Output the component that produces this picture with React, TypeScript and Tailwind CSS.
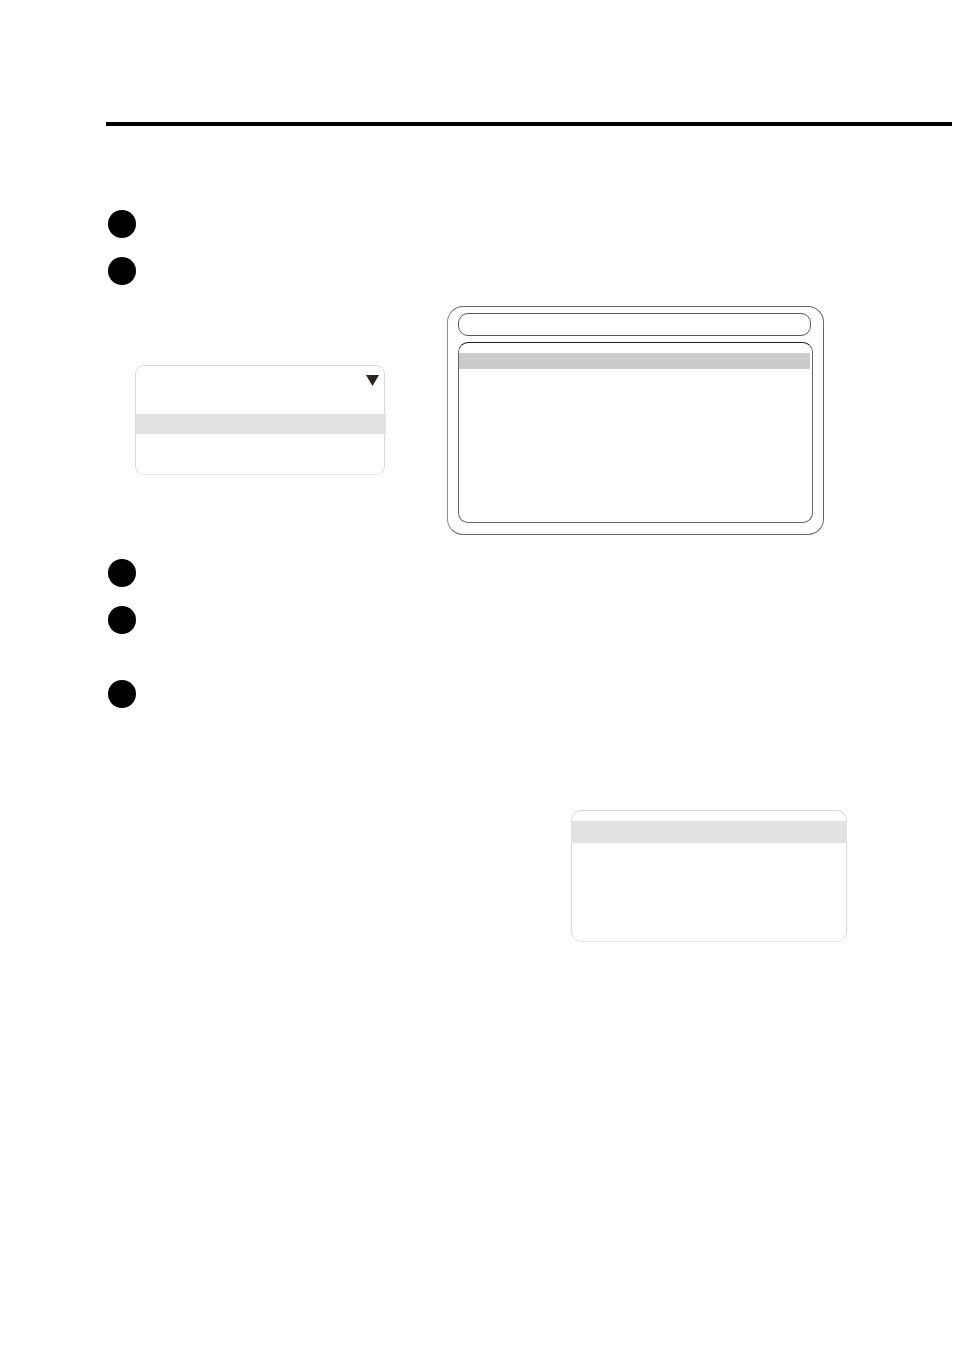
const Bullet = () => {
	return <li className="size-7 shrink-0 rounded-full bg-black" />
}

const MenuPanel = () => {
	return (
		<div className="mt-[59px] self-start rounded-[9px] border border-[#d9d9d9] border-b-[#e4e4e4] pt-[9px] pb-10">
			<div className="flex justify-end pr-[5px]">
				<svg width={13} height={11} viewBox="0 0 13 11" className="block fill-[#2a231e]">
					<path d="M0 0H13L6.5 11Z" />
				</svg>
			</div>
			<div className="mt-7 -mr-0.5 h-5 bg-[#e2e2e2]" />
		</div>
	)
}

const ScreenPanel = () => {
	return (
		<div className="rounded-2xl border border-[#666666] border-l-[#8c8c8c] pt-1.5 pr-2.5 pb-[11px] pl-2.5">
			<div className="mr-0.5 h-[23px] rounded-[10px] border border-[#5a5a5a]" />
			<div className="mt-1.5 h-[181px] rounded-[10px] border border-[#666666] border-t-[#231f20] pt-2.5 pr-0.5">
				<div className="h-4 bg-[#cbcbcb]" />
			</div>
		</div>
	)
}

const ListPanel = () => {
	return (
		<div className="mt-[102px] mr-[106px] ml-[571px] h-[132px] rounded-[10px] border border-[#d9d9d9] border-b-[#e4e4e4] pt-2.5">
			<div className="-mx-px h-[22px] bg-[#e2e2e2]" />
		</div>
	)
}

const App = () => {
	return (
		<main className="flex min-h-screen flex-col bg-white pt-[122px]">
			<hr className="mr-px ml-[106px] h-1 border-0 bg-black" />
			<ol className="mt-[84px] ml-[108px] flex flex-col gap-[19px]">
				<Bullet />
				<Bullet />
			</ol>
			<section className="mt-[21px] mr-[129px] ml-[135px] grid grid-cols-[250fr_377fr] gap-x-[62px]">
				<MenuPanel />
				<ScreenPanel />
			</section>
			<ol className="mt-6 ml-[108px] flex flex-col gap-[19px]">
				<Bullet />
				<Bullet />
			</ol>
			<ol className="mt-[46px] ml-[108px] flex flex-col">
				<Bullet />
			</ol>
			<ListPanel />
		</main>
	)
}

export default App;
